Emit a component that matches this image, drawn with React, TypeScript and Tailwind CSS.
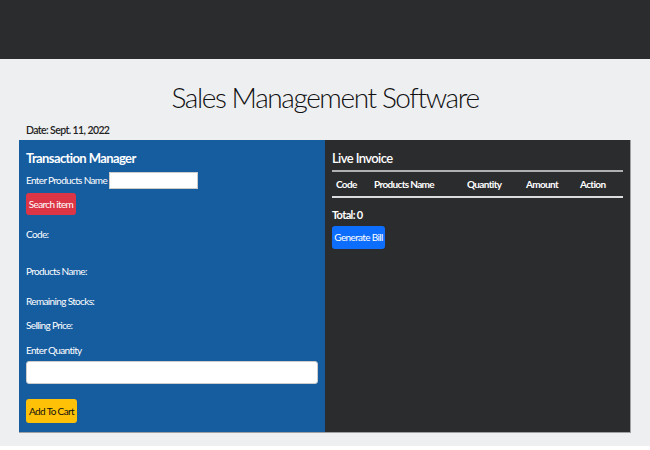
import React from "react";

export default function App() {
  const font = { fontFamily: "Lato, 'Open Sans', sans-serif" };
  return (
    <div className="w-[650px] min-h-[450px] bg-white" style={font}>
      <div className="h-[59px] bg-[#2b2c2e]" />
      <div className="bg-[#eeeff1] pb-[13px]">
        <h1 className="pt-[21px] h-[60px] text-center text-[28px] leading-[34px] font-light text-[#111] tracking-[-1.4px]">
          Sales Management Software
        </h1>
        <div className="ml-[26px] mt-[1px] h-[20px] text-[10.5px] leading-[20px] font-semibold text-[#222] tracking-[-0.6px]">
          Date: Sept. 11, 2022
        </div>
        <div className="mx-[19px] flex h-[293px] border-r border-b border-[#a0a0a0]">
          <div className="w-[306px] bg-[#165da0] px-[7px] pt-[8px] text-white text-[10px] tracking-[-0.65px] flex flex-col">
            <div className="h-[20px] leading-[20px] text-[13px] font-bold tracking-[-0.6px]">Transaction Manager</div>
            <div className="mt-[3px] flex items-center h-[18px]">
              <span className="leading-[14px]">Enter Products Name</span>
              <div className="ml-[2px] w-[89px] h-[17px] bg-white border border-[#ccc]" />
            </div>
            <div className="mt-[4px] w-[50px] whitespace-nowrap h-[22px] rounded-[3px] bg-[#dc3545] flex items-center justify-center">Search item</div>
            <div className="mt-[12px] h-[14px] leading-[14px]">Code:</div>
            <div className="mt-[23px] h-[14px] leading-[14px]">Products Name:</div>
            <div className="mt-[16px] h-[14px] leading-[14px]">Remaining Stocks:</div>
            <div className="mt-[10px] h-[14px] leading-[14px]">Selling Price:</div>
            <div className="mt-[11px] h-[14px] leading-[14px]">Enter Quantity</div>
            <div className="mt-[4px] w-[292px] h-[23px] rounded-[3px] bg-white border border-[#ccc]" />
            <div className="mt-[15px] w-[51px] whitespace-nowrap h-[24px] rounded-[3px] bg-[#ffc107] text-[#111] flex items-center justify-center">Add To Cart</div>
          </div>
          <div className="flex-1 bg-[#2b2c2e] px-[7px] pt-[8px] text-white text-[10px] tracking-[-0.65px] flex flex-col">
            <div className="h-[20px] leading-[20px] text-[13px] font-semibold tracking-[-0.6px]">Live Invoice</div>
            <div className="mt-[2px] h-[2px] bg-[#b0b0b0]" />
            <div className="h-[24px] flex items-center font-bold">
              <div className="w-[42px] pl-[4px]">Code</div>
              <div className="w-[93px]">Products Name</div>
              <div className="w-[59px]">Quantity</div>
              <div className="w-[54px]">Amount</div>
              <div>Action</div>
            </div>
            <div className="h-[2px] bg-[#dcdcdc]" />
            <div className="mt-[9px] h-[16px] leading-[16px] text-[11px] font-bold">Total: 0</div>
            <div className="mt-[3px] w-[53px] whitespace-nowrap h-[23px] rounded-[3px] bg-[#0d6efd] flex items-center justify-center">Generate Bill</div>
          </div>
        </div>
      </div>
    </div>
  );
}
